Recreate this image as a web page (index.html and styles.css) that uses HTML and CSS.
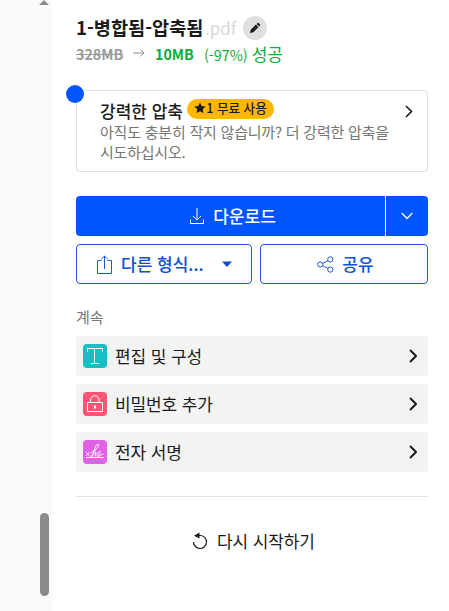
FILE: index.html
```html
<!DOCTYPE html>
<html lang="ko">
<head>
<meta charset="utf-8">
<title>PDF 압축</title>
<link rel="stylesheet" href="styles.css">
</head>
<body>
<div class="page">
  <aside class="gutter">
    <svg class="scroll-up" width="10" height="5" viewBox="0 0 10 5"><path d="M5 0L10 5H0z" fill="#8b8b8b"/></svg>
    <div class="scroll-thumb"></div>
  </aside>
  <main class="panel">
    <header class="file">
      <h1 class="name">1-병합됨-압축됨</h1><span class="ext">.pdf</span>
      <button class="edit" aria-label="edit"><svg width="12" height="12" viewBox="0 0 12 12" fill="#1b1b1b"><path d="M1 11l.8-3.3L6.9 2.6l2.6 2.6-5.2 5.1z"/><path d="M7.6 1.9l.9-.9q.5-.4 1 0l1.6 1.6q.4.5 0 1l-.9.9z"/></svg></button>
    </header>
    <div class="sizes">
      <s class="before">328MB</s>
      <svg class="arrow" width="12" height="8" viewBox="0 0 12 8" fill="none" stroke="#929292"><path d="M0 4h11M7.5.7L11 4 7.5 7.3"/></svg>
      <b class="after">10MB</b>
      <span class="saved">(-97%) <span class="result">성공</span></span>
    </div>
    <section class="offer">
      <i class="dot"></i>
      <div class="offer-text">
        <div class="offer-head"><h2>강력한 압축</h2><span class="badge"><svg width="12" height="12" viewBox="0 0 12 12"><path d="M6 .5l1.7 3.4 3.8.6-2.7 2.7.6 3.8L6 9.2 2.600 11l.6-3.800L.5 4.500l3.800-.6z" fill="#1b1b1b"/></svg>1 무료 사용</span></div>
        <p>아직도 충분히 작지 않습니까? 더 강력한 압축을<br>시도하십시오.</p>
      </div>
      <svg class="offer-chevron" width="8" height="13" viewBox="0 0 8 13" fill="none" stroke="#1b1b1b" stroke-width="1.600"><path d="M1 1l5.500 5.500L1 12"/></svg>
    </section>
    <div class="download">
      <button class="download-main"><svg width="14" height="16" viewBox="0 0 14 16" fill="none" stroke="#fff"><path d="M7 0v12M3 8l4 4 4-4M.5 11.500v4h13v-4"/></svg><span>다운로드</span></button>
      <button class="download-more" aria-label="more"><svg width="12" height="8" viewBox="0 0 12 8" fill="none" stroke="#fff" stroke-width="1.300"><path d="M.7 1L6 6.500 11.300 1"/></svg></button>
    </div>
    <div class="actions">
      <button class="outline export"><svg width="15" height="19" viewBox="0 0 15 19" fill="none" stroke="#1a56d6"><path d="M4.500 5.500h-4v13h14v-13h-4M7.500 14V1M4.300 4.200L7.500 1l3.200 3.200"/></svg><span class="export-label">다른 형식...</span><svg class="caret" width="10" height="6" viewBox="0 0 10 6"><path d="M0 .5h10L5 6z" fill="#0f4fd8"/></svg></button>
      <button class="outline share"><svg width="17" height="17" viewBox="0 0 17 17" fill="none" stroke="#1a56d6"><circle cx="3.200" cy="8.500" r="2.600"/><circle cx="13.300" cy="3.400" r="2.600"/><circle cx="13.300" cy="13.600" r="2.600"/><path d="M5.600 7.400L11 4.600M5.600 9.700l5.400 2.700"/></svg><span>공유</span></button>
    </div>
    <h3 class="next">계속</h3>
    <nav class="tools">
      <a class="tool"><svg class="icon teal" width="24" height="24" viewBox="0 0 24 24" fill="none" stroke="#fff"><path d="M4.500 8V4.500h15V8M4.500 4.500h15M11.500 4.500v15M8 19.500h8"/></svg><span>편집 및 구성</span><svg class="chev" width="8" height="14" viewBox="0 0 8 14"><path d="M1 1l6 6-6 6"/></svg></a>
      <a class="tool"><svg class="icon red" width="24" height="24" viewBox="0 0 24 24" fill="none" stroke="#fff"><path d="M4.500 10.500h15v9h-15zM7.500 10.500V8a4.300 4.300 0 0 1 8.600 0v2.500"/><path d="M12 13.500v3" stroke-width="2"/></svg><span>비밀번호 추가</span><svg class="chev" width="8" height="14" viewBox="0 0 8 14"><path d="M1 1l6 6-6 6"/></svg></a>
      <a class="tool"><svg class="icon violet" width="24" height="24" viewBox="0 0 24 24" fill="none" stroke="#fff" stroke-linecap="round"><path d="M3.500 17.500h17M3.500 12.500l2.500 3M6 12.500l-2.500 3"/><path d="M8.500 12.500C12 11 16.500 6.500 15.500 4.500c-2-1.500-4 4-5.500 10-1 4-3.500 4.500-2 2 1.500-2 3-4.500 4.500-4.500s-1.500 4-.2 4 3.200-5.500 4.700-4.500-3.500 5-2 5 2.500-2 5-2.500"/></svg><span>전자 서명</span><svg class="chev" width="8" height="14" viewBox="0 0 8 14"><path d="M1 1l6 6-6 6"/></svg></a>
    </nav>
    <hr>
    <button class="restart"><svg width="16" height="18" viewBox="0 0 16 18" fill="none" stroke="#1b1b1b" stroke-width="1.200"><path d="M6 3.500h2.500A6.500 6.500 0 1 1 1.500 10"/><path d="M2 3.700L7.500.5v6z" fill="#1b1b1b" stroke="none"/></svg><span>다시 시작하기</span></button>
  </main>
</div>
</body>
</html>
```

FILE: styles.css
```css
* { box-sizing: border-box; }
body { margin: 0; background: #fff; color: #1b1b1b; font-family: "Noto Sans CJK KR", sans-serif; font-size: 17px; overflow: hidden; }
button { font: inherit; color: inherit; border: 0; padding: 0; background: none; white-space: nowrap; }
h1, h2, h3, p { margin: 0; font-weight: 400; }
svg { display: block; flex: none; }
span, h1, h2, h3, b, s { white-space: nowrap; }
.page { display: flex; height: 611px; }
.gutter { width: 52px; flex: none; background: #fafafa; display: flex; flex-direction: column; align-items: flex-end; justify-content: space-between; padding: 0 3px 15px 0; }
.scroll-thumb { width: 9px; height: 83px; border-radius: 5px; background: #8b8b8b; }
.panel { width: 376px; padding: 16px 0 0 24px; }
.file { display: flex; align-items: center; height: 24px; }
.name { font-size: 18.6px; font-weight: 700; width: 129px; padding-bottom: 3px; }
.ext { color: #d8d8d8; font-size: 17px; width: 38px; padding-bottom: 2px; }
.edit { width: 24px; height: 24px; border-radius: 50%; background: #dfdfdf; display: grid; place-items: center; }
.sizes { display: flex; align-items: center; height: 24px; margin-top: 2px; font-size: 14.3px; line-height: 24px; }
.before { color: #9b9b9b; font-weight: 700; width: 57px; }
.arrow { margin-top: -2px; }
.after { color: #0dab3b; font-weight: 700; margin-left: 10px; width: 49px; }
.saved { color: #0dab3b; }
.result { font-size: 17px; }
.offer { position: relative; display: flex; justify-content: space-between; height: 82px; margin-top: 24px; border: 1px solid #e1e1e1; border-radius: 4px; padding: 8px 14px 0 23px; }
.dot { position: absolute; left: -11px; top: -6px; width: 18px; height: 18px; border-radius: 50%; background: #0055ff; }
.offer-head { display: flex; height: 23px; }
.offer-head h2 { font-size: 17px; line-height: 23px; font-weight: 500; width: 87px; }
.badge { display: flex; align-items: center; justify-content: center; width: 87px; height: 20px; border-radius: 10px; background: #ffb700; font-size: 12.6px; line-height: 18px; padding-bottom: 2px; font-weight: 500; }
.offer p { color: #767676; font-size: 15px; line-height: 20px; white-space: nowrap; letter-spacing: -0.22px; }
.offer-chevron { margin-top: 6px; }
.download { display: flex; gap: 1px; height: 40px; margin-top: 24px; color: #fff; }
.download-main { flex: 1; background: #0055ff; border-radius: 4px 0 0 4px; display: flex; align-items: center; justify-content: center; gap: 9px; padding-left: 5px; font-weight: 500; }
.download-main span { padding-bottom: 2px; }
.download-more { width: 42px; background: #0055ff; border-radius: 0 4px 4px 0; display: grid; place-items: center; }
.actions { display: grid; grid-template-columns: 176px 168px; gap: 8px; height: 40px; margin-top: 8px; }
.outline { border: 1px solid #2457d6; border-radius: 4px; color: #0f4fd8; font-weight: 500; display: flex; align-items: center; }
.export { padding-left: 20px; }
.export-label { margin-left: 9px; width: 101px; text-align: left; padding-bottom: 2px; }
.share { justify-content: center; gap: 8px; padding-left: 3px; }
.share span { padding-bottom: 2px; }
.next { color: #767676; font-size: 15px; line-height: 20px; margin-top: 23px; }
.tools { display: grid; gap: 8px; margin-top: 9px; }
.tool { display: flex; align-items: center; height: 40px; padding: 0 11px 0 7px; border-radius: 4px; background: #f3f3f3; }
.tool span { flex: 1; margin-left: 8px; padding-bottom: 2px; letter-spacing: -0.1px; }
.icon { border-radius: 4px; }
.teal { background: #16bfc4; }
.red { background: #ff5574; }
.violet { background: #e062e4; }
.chev { fill: none; stroke: #1b1b1b; stroke-width: 2; }
hr { border: 0; height: 1px; background: #e1e1e1; margin: 24px 0 0; }
.restart { display: flex; align-items: center; gap: 9px; height: 24px; margin: 32px 0 0 116px; }
.restart span { padding-bottom: 2px; letter-spacing: -0.1px; }
```
